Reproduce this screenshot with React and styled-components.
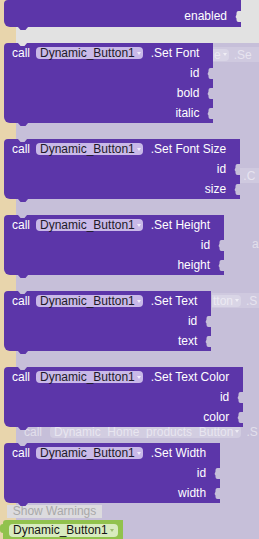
import React from 'react';
import styled, { createGlobalStyle } from 'styled-components';

const PURPLE = '#5c36a9';
const LAVENDER = '#c6bfd9';
const GREY = '#e2e2e2';
const BEIGE = '#e8d5ac';

const GlobalStyle = createGlobalStyle`
  html, body { margin: 0; padding: 0; }
  body {
    font-family: "Liberation Sans", Arial, sans-serif;
    overflow: hidden;
  }
`;

const Workspace = styled.div`
  position: relative;
  width: 259px;
  height: 539px;
  overflow: hidden;
  background:
    linear-gradient(to right, ${BEIGE} 16px, transparent 16px),
    linear-gradient(to bottom, ${GREY} 43px, ${LAVENDER} 43px);
`;

const Ghost = styled.div`
  position: absolute;
  top: ${p => p.$top}px;
  left: ${p => p.$left}px;
  right: 0;
  height: ${p => p.$h || 15}px;
  display: flex;
  align-items: center;
  overflow: hidden;
  white-space: nowrap;
  font-size: 12px;
  color: rgba(255, 255, 255, 0.5);
  background: ${p => (p.$band ? 'rgba(255,255,255,0.16)' : 'transparent')};
`;

const GhostPill = styled.span`
  display: inline-flex;
  align-items: center;
  height: 12px;
  padding: 0 2px 0 ${p => (p.$cut ? 1 : 4)}px;
  margin: 0 5px 0 ${p => p.$gap || 0}px;
  border-radius: ${p => (p.$cut ? '0 4px 4px 0' : '4px')};
  background: rgba(255, 255, 255, 0.22);
`;

const Content = styled.div`
  position: relative;
  z-index: 1;
  display: flex;
  flex-direction: column;
`;

const Stack = styled.div`
  display: flex;
  flex-direction: column;
  gap: 16px;
  padding-left: 4px;
`;

const Block = styled.div`
  position: relative;
  align-self: flex-start;
  display: flex;
  flex-direction: column;
  width: ${p => p.$width || 'auto'};
  padding: ${p => p.$pad || '0'} 0 ${p => p.$padB || '0'} 8px;
  background: ${PURPLE};
  border-radius: 4px 0 0 6px;
  color: #fff;
  font-size: 12px;

  &::before {
    content: '';
    display: ${p => (p.$noNotch ? 'none' : 'block')};
    position: absolute;
    top: 0;
    left: 14px;
    width: 9px;
    height: 3px;
    background: ${p => p.$bg};
    clip-path: polygon(0 0, 100% 0, 72% 100%, 28% 100%);
  }

  &::after {
    content: '';
    position: absolute;
    bottom: -3px;
    left: 14px;
    width: 10px;
    height: 3px;
    background: ${PURPLE};
    clip-path: polygon(0 0, 100% 0, 75% 100%, 25% 100%);
  }
`;

const HeadRow = styled.div`
  height: 20px;
  display: flex;
  align-items: center;
  padding-right: 14px;
  white-space: nowrap;
`;

const ParamRow = styled.div`
  height: 20px;
  display: flex;
  align-items: center;
  justify-content: flex-end;
  white-space: nowrap;
`;

const Pill = styled.span`
  display: inline-flex;
  align-items: center;
  height: 12px;
  padding: 0 2px 0 4px;
  margin: 0 8px 0 6px;
  border-radius: 4px;
  background: #c9b9e8;
  color: #1e1a28;
`;

const Caret = styled.span`
  width: 0;
  height: 0;
  margin-left: 2px;
  border-left: 2.5px solid transparent;
  border-right: 2.5px solid transparent;
  border-top: 3px solid ${p => p.$color || '#f1ecfb'};
`;

const NotchSvg = styled.svg`
  display: block;
  width: 6px;
  height: 11px;
  margin-left: 8px;
`;

const Footer = styled.div`
  display: flex;
  flex-direction: column;
  gap: 2px;
  margin-top: 2px;
`;

const WarnButton = styled.div`
  width: 95px;
  height: 13px;
  margin-left: 7px;
  background: #dcdbde;
  color: #a9a9a9;
  font-size: 12px;
  line-height: 13px;
  text-align: center;
`;

const ValueBlock = styled.div`
  position: relative;
  align-self: flex-start;
  margin-left: 3px;
  padding: 3px 5px 5px 6px;
  background: #91c24d;
  border-radius: 3px 0 0 0;
  font-size: 12px;

  &::before {
    content: '';
    position: absolute;
    left: -3px;
    top: 4px;
    width: 3px;
    height: 9px;
    background: #91c24d;
    border-radius: 3px 0 0 3px;
  }
`;

const ValuePill = styled.span`
  display: inline-flex;
  align-items: center;
  height: 13px;
  padding: 0 4px 0 4px;
  border-radius: 4px;
  background: #d8ebbf;
  color: #161616;
`;

const Notch = ({ bg }) => (
  <NotchSvg viewBox="0 0 6 11">
    <path
      d="M6,0 H3.5 Q1.5,0 1.5,2 V3.5 Q0,5.5 1.5,7.5 V9 Q1.5,11 3.5,11 H6 Z"
      fill={bg}
    />
  </NotchSvg>
);

const methods = [
  { name: 'Set Font', params: ['id', 'bold', 'italic'], bg: GREY },
  { name: 'Set Font Size', params: ['id', 'size'] },
  { name: 'Set Height', params: ['id', 'height'] },
  { name: 'Set Text', params: ['id', 'text'] },
  { name: 'Set Text Color', params: ['id', 'color'] },
  { name: 'Set Width', params: ['id', 'width'] },
];

const MethodBlock = ({ name, params, bg = LAVENDER }) => (
  <Block $bg={bg}>
    <HeadRow>
      call
      <Pill>
        Dynamic_Button1
        <Caret />
      </Pill>
      .{name}
    </HeadRow>
    {params.map(p => (
      <ParamRow key={p}>
        {p}
        <Notch bg={bg === GREY ? LAVENDER : bg} />
      </ParamRow>
    ))}
  </Block>
);

const ghostCaret = 'rgba(255,255,255,0.6)';

export default function App() {
  return (
    <Workspace>
      <GlobalStyle />
      <Ghost $top={47} $left={213} $band>
        <GhostPill $cut>e<Caret $color={ghostCaret} /></GhostPill>.Se
      </Ghost>
      <Ghost $top={168} $left={240} $band>
        &nbsp;.C
      </Ghost>
      <Ghost $top={236} $left={252}>a</Ghost>
      <Ghost $top={293} $left={212} $band>
        <GhostPill $cut>tton<Caret $color={ghostCaret} /></GhostPill>.S
      </Ghost>
      <Ghost $top={425} $left={24} $h={13}>
        call
        <GhostPill $gap={8}>
          Dynamic_Home_products_Button
          <Caret $color={ghostCaret} />
        </GhostPill>
        .S
      </Ghost>

      <Content>
        <Stack>
          <Block $width="229px" $pad="6px" $padB="1px" $noNotch $bg={GREY}>
            <ParamRow>
              enabled
              <Notch bg={GREY} />
            </ParamRow>
          </Block>
          {methods.map(m => (
            <MethodBlock key={m.name} {...m} />
          ))}
        </Stack>
        <Footer>
          <WarnButton>Show Warnings</WarnButton>
          <ValueBlock>
            <ValuePill>
              Dynamic_Button1
              <Caret $color="#9bbd72" />
            </ValuePill>
          </ValueBlock>
        </Footer>
      </Content>
    </Workspace>
  );
}
